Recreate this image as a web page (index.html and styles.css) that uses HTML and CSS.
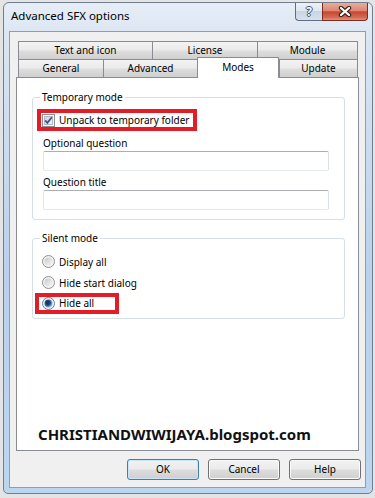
FILE: index.html
```html
<!DOCTYPE html>
<html>
<head>
<meta charset="utf-8">
<link rel="stylesheet" href="styles.css">
</head>
<body>
<div class="window">
  <div class="titlebar">
    <span class="title">Advanced SFX options</span>
    <div class="caption-btns">
      <div class="cbtn help"><span class="qmark">?</span></div>
      <div class="cbtn close">
        <svg width="14" height="11" viewBox="0 0 14 11">
          <path d="M3 2 L11 9 M11 2 L3 9" stroke="#3b1f1a" stroke-width="4.4" stroke-linecap="round" fill="none"/>
          <path d="M3 2 L11 9 M11 2 L3 9" stroke="#ffffff" stroke-width="2.3" stroke-linecap="round" fill="none"/>
        </svg>
      </div>
    </div>
  </div>
  <div class="client">
    <div class="tabs">
      <div class="tabrow row1">
        <div class="tab">Text and icon</div>
        <div class="tab">License</div>
        <div class="tab last">Module</div>
      </div>
      <div class="tabrow row2">
        <div class="tab">General</div>
        <div class="tab">Advanced</div>
        <div class="tab active">Modes</div>
        <div class="tab last">Update</div>
      </div>
    </div>
    <div class="panel">
      <fieldset class="group">
        <legend class="legend">Temporary mode</legend>
        <div class="hl hl-check">
          <svg class="box" width="13" height="13" viewBox="0 0 13 13">
            <defs>
              <linearGradient id="cbg" x1="0" y1="0" x2="1" y2="1">
                <stop offset="0" stop-color="#cbd2dc"/>
                <stop offset="1" stop-color="#f4f6f9"/>
              </linearGradient>
            </defs>
            <rect x="0.5" y="0.5" width="12" height="12" fill="#f6f6f6" stroke="#8e8f8f"/>
            <rect x="2.5" y="2.5" width="8" height="8" fill="url(#cbg)" stroke="#b3b9c4"/>
            <path d="M3.2 6.4 L5.4 8.8 L9.8 3.2" stroke="#41558a" stroke-width="1.8" fill="none"/>
          </svg>
          <span>Unpack to temporary folder</span>
        </div>
        <div class="field-label">Optional question</div>
        <div class="input"></div>
        <div class="field-label second">Question title</div>
        <div class="input"></div>
      </fieldset>

      <fieldset class="group silent">
        <legend class="legend">Silent mode</legend>
        <div class="opt">
          <svg class="radio" width="13" height="13" viewBox="0 0 13 13">
            <defs>
              <linearGradient id="rg1" x1="0" y1="0" x2="1" y2="1">
                <stop offset="0" stop-color="#c9c9c9"/>
                <stop offset="1" stop-color="#f6f6f6"/>
              </linearGradient>
            </defs>
            <circle cx="6.5" cy="6.5" r="6" fill="#f3f3f3" stroke="#8f8f8f"/>
            <circle cx="6.5" cy="6.5" r="4" fill="url(#rg1)"/>
          </svg>
          <span>Display all</span>
        </div>
        <div class="opt">
          <svg class="radio" width="13" height="13" viewBox="0 0 13 13">
            <circle cx="6.5" cy="6.5" r="6" fill="#f3f3f3" stroke="#8f8f8f"/>
            <circle cx="6.5" cy="6.5" r="4" fill="url(#rg1)"/>
          </svg>
          <span>Hide start dialog</span>
        </div>
        <div class="hl hl-radio">
          <svg class="radio" width="13" height="13" viewBox="0 0 13 13">
            <defs>
              <radialGradient id="rdot" cx="0.4" cy="0.4" r="0.6">
                <stop offset="0" stop-color="#0e2a4f"/>
                <stop offset="0.55" stop-color="#1f4f86"/>
                <stop offset="1" stop-color="#8ec2ea"/>
              </radialGradient>
            </defs>
            <circle cx="6.5" cy="6.5" r="6" fill="#eef2f6" stroke="#6f7e8f"/>
            <circle cx="6.5" cy="6.5" r="4" fill="url(#rdot)"/>
          </svg>
          <span>Hide all</span>
        </div>
      </fieldset>

      <div class="wm">CHRISTIANDWIWIJAYA.blogspot.com</div>
    </div>
    <div class="buttons">
      <div class="btn default">OK</div>
      <div class="btn">Cancel</div>
      <div class="btn">Help</div>
    </div>
  </div>
</div>
</body>
</html>
```
FILE: styles.css
```css
* { box-sizing: border-box; }
html, body { margin: 0; }
body {
  width: 375px;
  height: 498px;
  overflow: hidden;
  background: #e4e4e4;
  font-family: "Noto Sans", "Liberation Sans", Arial, sans-serif;
  font-size: 10px;
  color: #000;
  padding: 2px 0 0 3px;
}

.window {
  width: 370px;
  height: 492px;
  border: 1px solid #707f90;
  border-radius: 6px 6px 5px 5px;
  background: linear-gradient(#e6edf6 0, #d9e5f2 40px, #b9d1eb 55%, #bdd6ef 100%);
  padding: 0 6px 5px 5px;
  display: flex;
  flex-direction: column;
}

.titlebar {
  height: 28px;
  display: flex;
  align-items: flex-start;
}
.title {
  font-size: 11.5px;
  line-height: 16px;
  margin: 5px 0 0 2px;
  color: #000;
}
.caption-btns {
  margin-left: auto;
  margin-right: -2px;
  display: flex;
}
.cbtn {
  height: 18px;
  border: 1px solid #5d6e85;
  border-top: none;
  display: flex;
  align-items: center;
  justify-content: center;
}
.help {
  width: 27px;
  border-right: none;
  border-radius: 0 0 0 4px;
  background: linear-gradient(#eef2f7 0, #dfe6ef 45%, #c9d5e3 50%, #d8e2ec 100%);
}
.qmark {
  font-weight: 700;
  font-size: 12px;
  line-height: 14px;
  color: #f8f9fb;
  text-shadow: 1px 0 0 #43536a, -1px 0 0 #43536a, 0 1px 0 #43536a, 0 -1px 0 #43536a;
}
.close {
  width: 46px;
  border-color: #7c2c20;
  border-radius: 0 0 4px 0;
  background: linear-gradient(#eaab9d 0, #dc8873 45%, #c8472f 52%, #d36c54 85%, #e39479 100%);
}

.client {
  height: 457px;
  border: 1px solid #8e9db0;
  background: #f0f0f0;
  padding: 9px 6px 0 6px;
}

.tabs { padding-left: 2px; }
.tabrow { display: grid; }
.row1 { grid-template-columns: 134px 105px 101px; }
.row2 {
  grid-template-columns: 85px 94px 82px 79px;
  margin-top: -2px;
  align-items: end;
}
.tab {
  height: 18px;
  border: 1px solid #898c95;
  border-right: none;
  border-bottom: none;
  background: linear-gradient(#f3f3f3 0, #ebebeb 45%, #dddddd 55%, #cfcfcf 100%);
  text-align: center;
  line-height: 17px;
  white-space: nowrap;
}
.tab.last { border-right: 1px solid #898c95; }
.tab.active {
  height: 21px;
  margin-bottom: -1px;
  background: #fff;
  border-right: 1px solid #898c95;
  line-height: 18px;
  position: relative;
  z-index: 1;
}

.panel {
  height: 374px;
  border: 1px solid #898c95;
  background: #fff;
  padding: 13px 13px 0 15px;
  display: flex;
  flex-direction: column;
}

.group {
  border: 1px solid #d5dfe5;
  border-radius: 3px;
  margin: 0;
  padding: 5px 0 9px 4px;
  min-width: 0;
}
.legend {
  padding: 0 2px;
  margin-left: 3px;
  line-height: 13px;
}
.silent {
  margin-top: 12px;
  padding: 6px 0 4px 4px;
}

.hl {
  border: 4px solid #e31d27;
  display: flex;
  align-items: center;
  gap: 4px;
  line-height: 13px;
}
.hl-check {
  width: 160px;
  height: 22px;
  padding-left: 1px;
}
.hl-radio {
  width: 84px;
  height: 21px;
  margin-left: -2px;
  padding-left: 3px;
}
.box, .radio { flex: none; display: block; }

.field-label {
  margin-top: 5px;
  padding-left: 6px;
  line-height: 14px;
}
.field-label.second { margin-top: 4px; }
.input {
  margin: 1px 0 0 6px;
  width: 286px;
  height: 20px;
  border: 1px solid;
  border-color: #abadb3 #dbdfe6 #e3e9ef #e2e3ea;
  border-radius: 2px;
  background: #fff;
}

.opt {
  height: 21px;
  display: flex;
  align-items: center;
  gap: 4px;
  padding-left: 5px;
}

.wm {
  margin-top: 105px;
  padding-left: 6px;
  font-weight: 700;
  font-size: 15px;
  line-height: 20px;
  white-space: nowrap;
  color: #111;
}

.buttons {
  display: flex;
  justify-content: flex-end;
  gap: 9px;
  margin-top: 8px;
  margin-right: -2px;
}
.btn {
  width: 72px;
  height: 21px;
  border: 1px solid #707070;
  border-radius: 3px;
  background: linear-gradient(#f2f2f2 0, #ebebeb 48%, #dddddd 52%, #cfcfcf 100%);
  box-shadow: inset 0 0 0 1px #fbfbfb;
  text-align: center;
  line-height: 19px;
}
.btn.default {
  border-color: #3c7fb1;
  box-shadow: inset 0 0 0 1px #c8e6f8;
}
```
